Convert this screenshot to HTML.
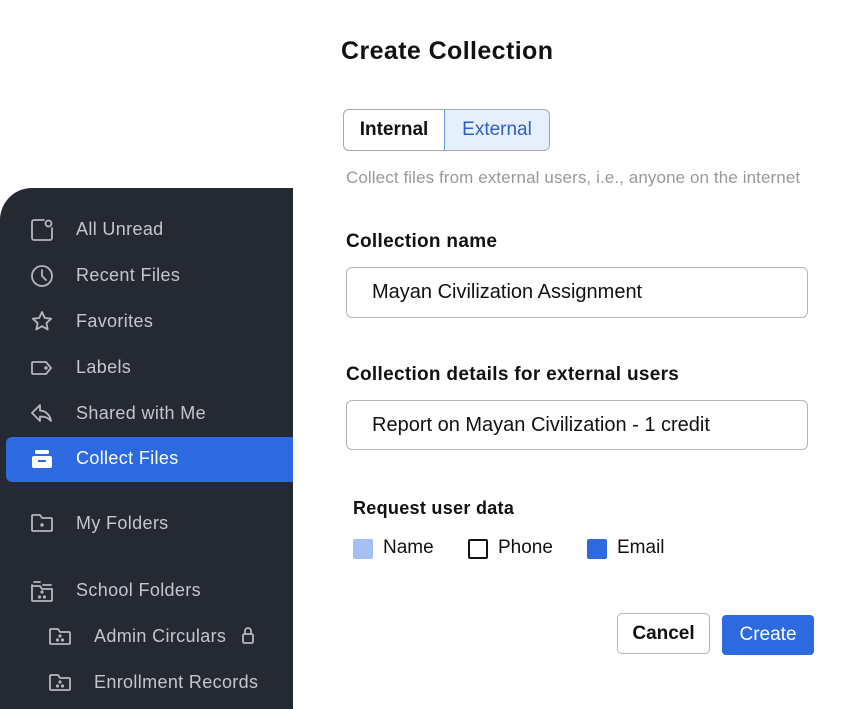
<!DOCTYPE html>
<html><head><style>
*{margin:0;padding:0;box-sizing:border-box}
body{width:859px;height:709px;background:#fff;position:relative;overflow:hidden;font-family:"Liberation Sans",sans-serif}
.a{position:absolute;white-space:nowrap}
#sb{position:absolute;left:0;top:188px;width:293px;height:521px;background:#252932;border-top-left-radius:32px}
.it{position:absolute;color:#c4c6cb;font-size:18px;letter-spacing:0.35px}
.ic{position:absolute}
.input{position:absolute;border:1px solid #b5b5b5;border-radius:6px;background:#fff;font-size:20px;color:#111;padding-left:25px;display:flex;align-items:center}
.lbl{font-size:19px;font-weight:bold;color:#111;letter-spacing:0.3px}
</style></head><body>
<div class="a" style="left:341px;top:37px;font-size:25px;font-weight:bold;color:#111;letter-spacing:0.4px">Create Collection</div>
<div class="a" style="left:343px;top:109px;width:207px;height:42px;border:1px solid #a8a8a8;border-radius:6px;overflow:hidden">
 <div class="a" style="left:0;top:0;width:100px;height:40px;font-size:19px;font-weight:bold;color:#111;display:flex;align-items:center;justify-content:center">Internal</div>
 <div class="a" style="left:100px;top:-1px;width:106px;height:42px;background:#e7effc;border:1px solid #6e98e6;border-radius:0 6px 6px 0;font-size:19px;color:#2d5fc8;display:flex;align-items:center;justify-content:center">External</div>
</div>
<div class="a" style="left:346px;top:168px;font-size:17px;color:#999;letter-spacing:0.1px">Collect files from external users, i.e., anyone on the internet</div>
<div class="a lbl" style="left:346px;top:231px">Collection name</div>
<div class="input" style="left:346px;top:267px;width:462px;height:51px">Mayan Civilization Assignment</div>
<div class="a lbl" style="left:346px;top:364px">Collection details for external users</div>
<div class="input" style="left:346px;top:400px;width:462px;height:50px">Report on Mayan Civilization - 1 credit</div>
<div class="a lbl" style="left:353px;top:498px;font-size:18px">Request user data</div>
<div class="a" style="left:353px;top:539px;width:20px;height:20px;background:#a4bff2;border-radius:2px"></div>
<div class="a" style="left:383px;top:537px;font-size:19px;color:#111">Name</div>
<div class="a" style="left:468px;top:539px;width:20px;height:20px;border:2px solid #111;border-radius:2px"></div>
<div class="a" style="left:498px;top:537px;font-size:19px;color:#111">Phone</div>
<div class="a" style="left:587px;top:539px;width:20px;height:20px;background:#2d6ae0;border-radius:2px"></div>
<div class="a" style="left:617px;top:537px;font-size:19px;color:#111">Email</div>
<div class="a" style="left:617px;top:613px;width:93px;height:41px;border:1px solid #b5b5b5;border-radius:5px;font-size:19px;font-weight:bold;color:#111;display:flex;align-items:center;justify-content:center">Cancel</div>
<div class="a" style="left:722px;top:615px;width:92px;height:40px;background:#2d6ae0;border-radius:4px;font-size:19px;color:#fff;display:flex;align-items:center;justify-content:center">Create</div>

<div id="sb"></div>
<div class="a" style="left:6px;top:437px;width:287px;height:45px;background:#2d6ae0;border-radius:6px 0 0 6px"></div>
<div class="it" style="left:76px;top:219px">All Unread</div>
<div class="it" style="left:76px;top:265px">Recent Files</div>
<div class="it" style="left:76px;top:311px">Favorites</div>
<div class="it" style="left:76px;top:357px">Labels</div>
<div class="it" style="left:76px;top:403px">Shared with Me</div>
<div class="it" style="left:76px;top:448px;color:#fff">Collect Files</div>
<div class="it" style="left:76px;top:513px">My Folders</div>
<div class="it" style="left:76px;top:580px">School Folders</div>
<div class="it" style="left:94px;top:626px">Admin Circulars</div>
<div class="it" style="left:94px;top:672px">Enrollment Records</div>
<svg class="ic" style="left:0;top:0" width="300" height="709" fill="none" stroke="#b5b7bc" stroke-width="1.8" stroke-linecap="round" stroke-linejoin="round">
 <path d="M44 220h-10a2 2 0 0 0-2 2v16a2 2 0 0 0 2 2h16a2 2 0 0 0 2-2v-10"/><circle cx="48.5" cy="223.5" r="3"/>
 <circle cx="42" cy="276" r="10"/><path d="M42 270v6l4 4"/>
 <path d="M42 312l2.8 6 6.4.7-4.8 4.4 1.3 6.4-5.7-3.3-5.7 3.3 1.3-6.4-4.8-4.4 6.4-.7z"/>
 <path d="M33 362h13l5 6-5 6h-13a1 1 0 0 1-1-1v-10a1 1 0 0 1 1-1z"/><circle cx="46" cy="368" r=".8"/>
 <path d="M40 405l-8 8 8 8v-4.5c5 0 8 1 11 4.5-1-6-5-10-11-10.5z"/>
 <path d="M32 516v14a1 1 0 0 0 1 1h18a1 1 0 0 0 1-1v-11a1 1 0 0 0-1-1h-9l-2-3h-7a1 1 0 0 0-1 1z"/><circle cx="42" cy="525" r=".8"/>
 <path d="M32 585v15a1 1 0 0 0 1 1h18a1 1 0 0 0 1-1v-11h-10l-2-3h-8M34 582h6M43 585h8"/><circle cx="42" cy="592" r=".7"/><circle cx="39.5" cy="597" r=".7"/><circle cx="44.5" cy="597" r=".7"/>
 <path d="M50 630v13a1 1 0 0 0 1 1h18a1 1 0 0 0 1-1v-10a1 1 0 0 0-1-1h-9l-2-3h-7a1 1 0 0 0-1 1z"/><circle cx="60" cy="636" r=".7"/><circle cx="57.5" cy="640" r=".7"/><circle cx="62.5" cy="640" r=".7"/>
 <path d="M50 676v13a1 1 0 0 0 1 1h18a1 1 0 0 0 1-1v-10a1 1 0 0 0-1-1h-9l-2-3h-7a1 1 0 0 0-1 1z"/><circle cx="60" cy="682" r=".7"/><circle cx="57.5" cy="686" r=".7"/><circle cx="62.5" cy="686" r=".7"/>
 <rect x="243" y="634" width="10" height="9" rx="1.5"/><path d="M245 634v-3a3 3 0 0 1 6 0v3"/>
</svg>
<svg class="ic" style="left:31px;top:449px" width="22" height="20"><rect x="4" y="1" width="14" height="4" rx="1.5" fill="#fff"/><rect x="1" y="7" width="20" height="12" rx="2" fill="#fff"/><rect x="7" y="11" width="8" height="2" fill="#2d6ae0"/></svg>
</body></html>
